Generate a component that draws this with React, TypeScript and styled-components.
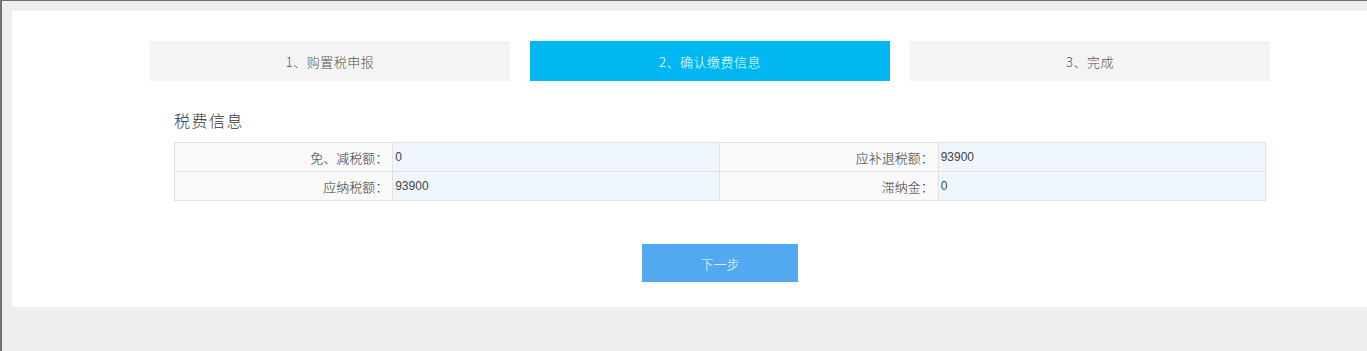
import React from 'react';
import styled, { createGlobalStyle } from 'styled-components';

const GlobalStyle = createGlobalStyle`
  html, body {
    margin: 0;
    padding: 0;
    height: 100%;
    overflow: hidden;
  }
  body {
    background: #eeeeee;
    font-family: 'Noto Sans CJK SC', 'Liberation Sans', sans-serif;
    color: #333;
  }
`;

const steps = [
  { label: '1、购置税申报', active: false },
  { label: '2、确认缴费信息', active: true },
  { label: '3、完成', active: false },
];

const rows = [
  [
    { label: '免、减税额：', value: '0' },
    { label: '应补退税额：', value: '93900' },
  ],
  [
    { label: '应纳税额：', value: '93900' },
    { label: '滞纳金：', value: '0' },
  ],
];

const App: React.FC = () => {
  return (
    <>
      <GlobalStyle />
      <Frame>
        <Panel>
          <StepBar>
            {steps.map((s) => (
              <Step key={s.label} $active={s.active}>
                {s.label}
              </Step>
            ))}
          </StepBar>

          <Section>
            <Title>税费信息</Title>
            <InfoTable>
              <colgroup>
                <col style={{ width: '20%' }} />
                <col style={{ width: '30%' }} />
                <col style={{ width: '20%' }} />
                <col style={{ width: '30%' }} />
              </colgroup>
              <tbody>
                {rows.map((row, i) => (
                  <tr key={i}>
                    {row.map((cell) => (
                      <React.Fragment key={cell.label}>
                        <LabelCell>{cell.label}</LabelCell>
                        <ValueCell>{cell.value}</ValueCell>
                      </React.Fragment>
                    ))}
                  </tr>
                ))}
              </tbody>
            </InfoTable>
          </Section>

          <NextButton>下一步</NextButton>
        </Panel>
      </Frame>
    </>
  );
};

const Frame = styled.div`
  height: 351px;
  box-sizing: border-box;
  border-top: 1px solid #72726a;
  border-left: 2px solid #72726a;
  padding: 10px 0 0 10px;
  background: #eeeeee;
  overflow: hidden;
`;

// 흰색 본문 패널
const Panel = styled.div`
  width: 1416px;
  background: #fff;
  padding: 30px 0 25px;
  box-sizing: border-box;
  display: flex;
  flex-direction: column;
`;

const StepBar = styled.div`
  display: flex;
  gap: 20px;
  padding-left: 138px;
`;

const Step = styled.div<{ $active: boolean }>`
  width: 360px;
  height: 40px;
  display: flex;
  align-items: center;
  justify-content: center;
  font-size: 13px;
  font-weight: 300;
  letter-spacing: 0.5px;
  background: ${(p) => (p.$active ? '#00b7f1' : '#f4f4f4')};
  color: ${(p) => (p.$active ? '#fff' : '#555')};
  box-shadow: ${(p) => (p.$active ? '0 0 6px rgba(0, 0, 0, 0.06)' : 'none')};
`;

const Section = styled.div`
  width: 1092px;
  margin: 27px auto 0;
`;

const Title = styled.div`
  font-size: 16px;
  font-weight: 300;
  line-height: 24px;
  letter-spacing: 1.5px;
  color: #333;
  margin-bottom: 10px;
`;

const InfoTable = styled.table`
  width: 100%;
  border-collapse: collapse;
  table-layout: fixed;
  border: 1px solid #e2e2e2;
`;

const LabelCell = styled.td`
  height: 28px;
  padding: 0 4px 0 0;
  border: 1px solid #e2e2e2;
  background: #f9f9f9;
  text-align: right;
  font-size: 13px;
  font-weight: 300;
  color: #333;
`;

const ValueCell = styled.td`
  height: 28px;
  padding: 0 0 0 2px;
  border: 1px solid #e2e2e2;
  background: #f0f6fd;
  font-family: 'Liberation Sans', 'Noto Sans CJK SC', sans-serif;
  font-size: 12px;
  color: #444;
`;

const NextButton = styled.button`
  width: 156px;
  height: 38px;
  margin: 43px auto 0;
  border: none;
  background: #52a9ef;
  color: #fff;
  font-family: 'Noto Sans CJK SC', sans-serif;
  font-size: 13px;
  font-weight: 300;
  cursor: pointer;

  &:hover {
    background: #3f9be6;
  }
`;

export default App;
